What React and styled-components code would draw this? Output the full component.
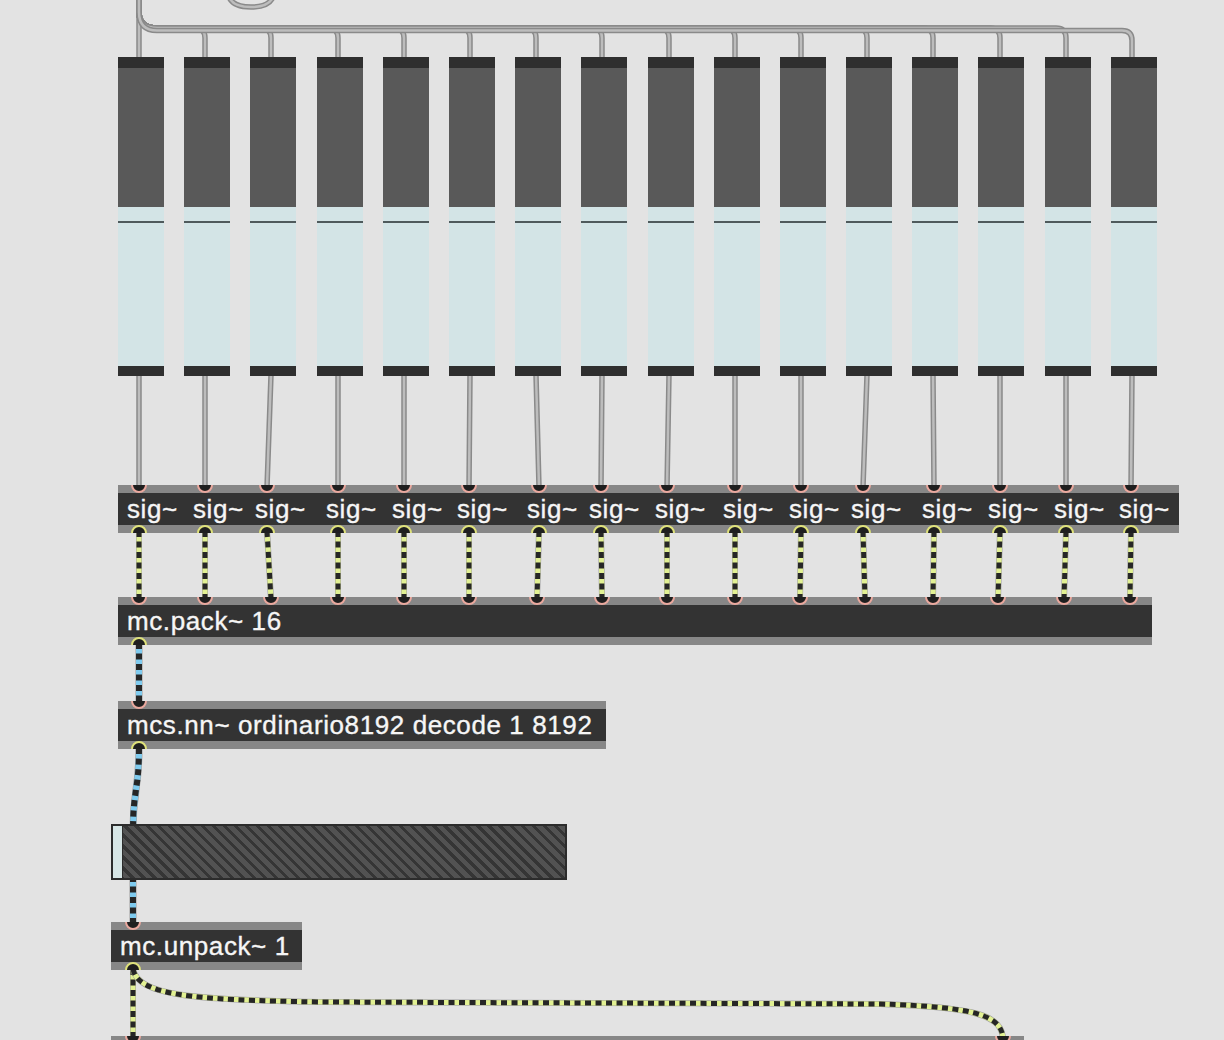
import React from "react";
import styled, { createGlobalStyle } from "styled-components";

const GlobalStyle = createGlobalStyle`
  html, body {
    margin: 0;
    padding: 0;
    background: #e3e3e3;
  }
`;

// port x positions read off the patch
const SLIDER_OUT = Array.from({ length: 16 }, (_, i) => Math.round(139 + i * 66.2));
const SIG_IN = [139, 205, 267, 338, 404, 469, 539, 601, 667, 735, 801, 863, 934, 1000, 1066, 1131];
const PACK_IN = [139, 205, 271, 338, 404, 469, 537, 602, 667, 735, 800, 865, 933, 998, 1064, 1130];

const Canvas = styled.div`
  position: relative;
  width: 1224px;
  height: 1040px;
  overflow: hidden;
  background: #e3e3e3;
  font-family: "Liberation Sans", Arial, sans-serif;
`;

const CordLayer = styled.svg`
  position: absolute;
  left: 0;
  top: 0;
  z-index: 0;
`;

const Node = styled.div`
  position: absolute;
  left: ${p => p.$x}px;
  top: ${p => p.$y}px;
  z-index: 1;
`;

const SliderRow = styled.div`
  display: flex;
  gap: 20.2px;
`;

const SliderBody = styled.div`
  width: 46px;
  height: 319px;
  display: flex;
  flex-direction: column;
  background: #595959;
`;

const SliderCap = styled.div`
  height: ${p => p.$h}px;
  background: #2f2f2f;
`;

const SliderTrack = styled.div`
  flex: 1;
`;

const SliderFill = styled.div`
  height: 159px;
  background: #d3e4e6;
  padding-top: 14px;
  box-sizing: border-box;
`;

const Knob = styled.div`
  height: 2px;
  background: #4f5a5c;
`;

const ObjectRow = styled.div`
  display: flex;
`;

const ObjectBox = styled.div`
  position: relative;
  width: ${p => p.$w}px;
  flex: none;
  display: flex;
  flex-direction: column;
  overflow: hidden;
`;

const Strip = styled.div`
  height: 8px;
  background: #878787;
`;

const Label = styled.div`
  height: 32px;
  background: #333333;
  color: #f6f6f6;
  font-size: 26px;
  line-height: 33px;
  letter-spacing: 0.6px;
  padding-left: 9px;
  white-space: nowrap;
  -webkit-text-stroke: 0.35px #f6f6f6;
`;

const Port = styled.div`
  position: absolute;
  left: ${p => p.$x - 8}px;
  ${p => (p.$out ? "bottom: -8px;" : "top: -8px;")}
  width: 16px;
  height: 16px;
  box-sizing: border-box;
  border-radius: 50%;
  background: #1f1f1f;
  border: 2px solid ${p => (p.$out ? "#dfe27a" : "#eaa89e")};
`;

const Hatch = styled.div`
  width: 456px;
  height: 56px;
  box-sizing: border-box;
  border: 2px solid #2c2c2c;
  display: flex;
  background: repeating-linear-gradient(
    45deg,
    #525252 0px,
    #525252 4.8px,
    #353535 4.8px,
    #353535 7.8px
  );
`;

const Thumb = styled.div`
  width: 9px;
  background: #d7e6e6;
  border-right: 1px solid #2c2c2c;
`;

function Cord({ d, kind }) {
  if (kind === "grey") {
    return (
      <g fill="none" strokeLinecap="round">
        <path d={d} stroke="#8a8a8a" strokeWidth="5.5" />
        <path d={d} stroke="#bdbdbd" strokeWidth="2.5" />
      </g>
    );
  }
  const light = kind === "mc" ? "#7fcbef" : "#e2f193";
  const w = kind === "mc" ? 6 : 5;
  return (
    <g fill="none">
      <path d={d} stroke="#9a9a9a" strokeWidth={w + 1} />
      <path d={d} stroke={light} strokeWidth={w} />
      <path d={d} stroke="#262626" strokeWidth={w} strokeDasharray="6 4.5" />
    </g>
  );
}

function MaxObject({ w, text, inlets = [], outlets = [] }) {
  return (
    <ObjectBox $w={w}>
      <Strip />
      <Label>{text}</Label>
      <Strip />
      {inlets.map(px => (
        <Port key={"i" + px} $x={px} />
      ))}
      {outlets.map(px => (
        <Port key={"o" + px} $x={px} $out />
      ))}
    </ObjectBox>
  );
}

function Slider() {
  return (
    <SliderBody>
      <SliderCap $h={11} />
      <SliderTrack />
      <SliderFill>
        <Knob />
      </SliderFill>
      <SliderCap $h={10} />
    </SliderBody>
  );
}

export default function App() {
  const sigLefts = SIG_IN.map(p => p - 21);

  const topCords = SLIDER_OUT.map((x, i) => {
    if (i === 0) return "M139 -3 L139 57";
    const y = i === 15 ? 30.5 : 28;
    return `M139 -3 L139 12 Q139 ${y} 157 ${y} L${x - 10} ${y} Q${x} ${y} ${x} ${y + 10} L${x} 58`;
  });

  return (
    <>
      <GlobalStyle />
      <Canvas>
        <CordLayer width="1224" height="1040" viewBox="0 0 1224 1040">
          <Cord kind="grey" d="M229 -3 Q233 7 251 7 Q269 7 273 -3" />
          {topCords.map((d, i) => (
            <Cord key={"t" + i} kind="grey" d={d} />
          ))}
          {SLIDER_OUT.map((x, i) => (
            <Cord key={"s" + i} kind="grey" d={`M${x} 375 L${SIG_IN[i]} 487`} />
          ))}
          {SIG_IN.map((x, i) => (
            <Cord key={"p" + i} kind="sig" d={`M${x} 531 L${PACK_IN[i]} 599`} />
          ))}
          <Cord kind="mc" d="M139 643 L139 703" />
          <Cord kind="mc" d="M139 748 C139 790, 133 790, 133 830" />
          <Cord kind="mc" d="M133 876 L133 924" />
          <Cord kind="sig" d="M133 969 L133 1042" />
          <Cord
            kind="sig"
            d="M133 969 C138 995, 190 1000, 320 1002 L880 1004 C975 1007, 1003 1015, 1003 1040"
          />
        </CordLayer>

        <Node $x={118} $y={57}>
          <SliderRow>
            {SLIDER_OUT.map(x => (
              <Slider key={x} />
            ))}
          </SliderRow>
        </Node>

        <Node $x={118} $y={485}>
          <ObjectRow>
            {sigLefts.map((x, i) => (
              <MaxObject
                key={"sig" + i}
                w={(i < 15 ? sigLefts[i + 1] : 1179) - x}
                text="sig~"
                inlets={[21]}
                outlets={[21]}
              />
            ))}
          </ObjectRow>
        </Node>

        <Node $x={118} $y={597}>
          <MaxObject
            w={1034}
            text="mc.pack~ 16"
            inlets={PACK_IN.map(p => p - 118)}
            outlets={[21]}
          />
        </Node>

        <Node $x={118} $y={701}>
          <MaxObject
            w={488}
            text="mcs.nn~ ordinario8192 decode 1 8192"
            inlets={[21]}
            outlets={[21]}
          />
        </Node>

        <Node $x={111} $y={824}>
          <Hatch>
            <Thumb />
          </Hatch>
        </Node>

        <Node $x={111} $y={922}>
          <MaxObject w={191} text="mc.unpack~ 1" inlets={[22]} outlets={[22]} />
        </Node>

        <Node $x={111} $y={1036}>
          <ObjectBox $w={913}>
            <Strip />
            <Port $x={22} />
            <Port $x={892} />
          </ObjectBox>
        </Node>
      </Canvas>
    </>
  );
}
